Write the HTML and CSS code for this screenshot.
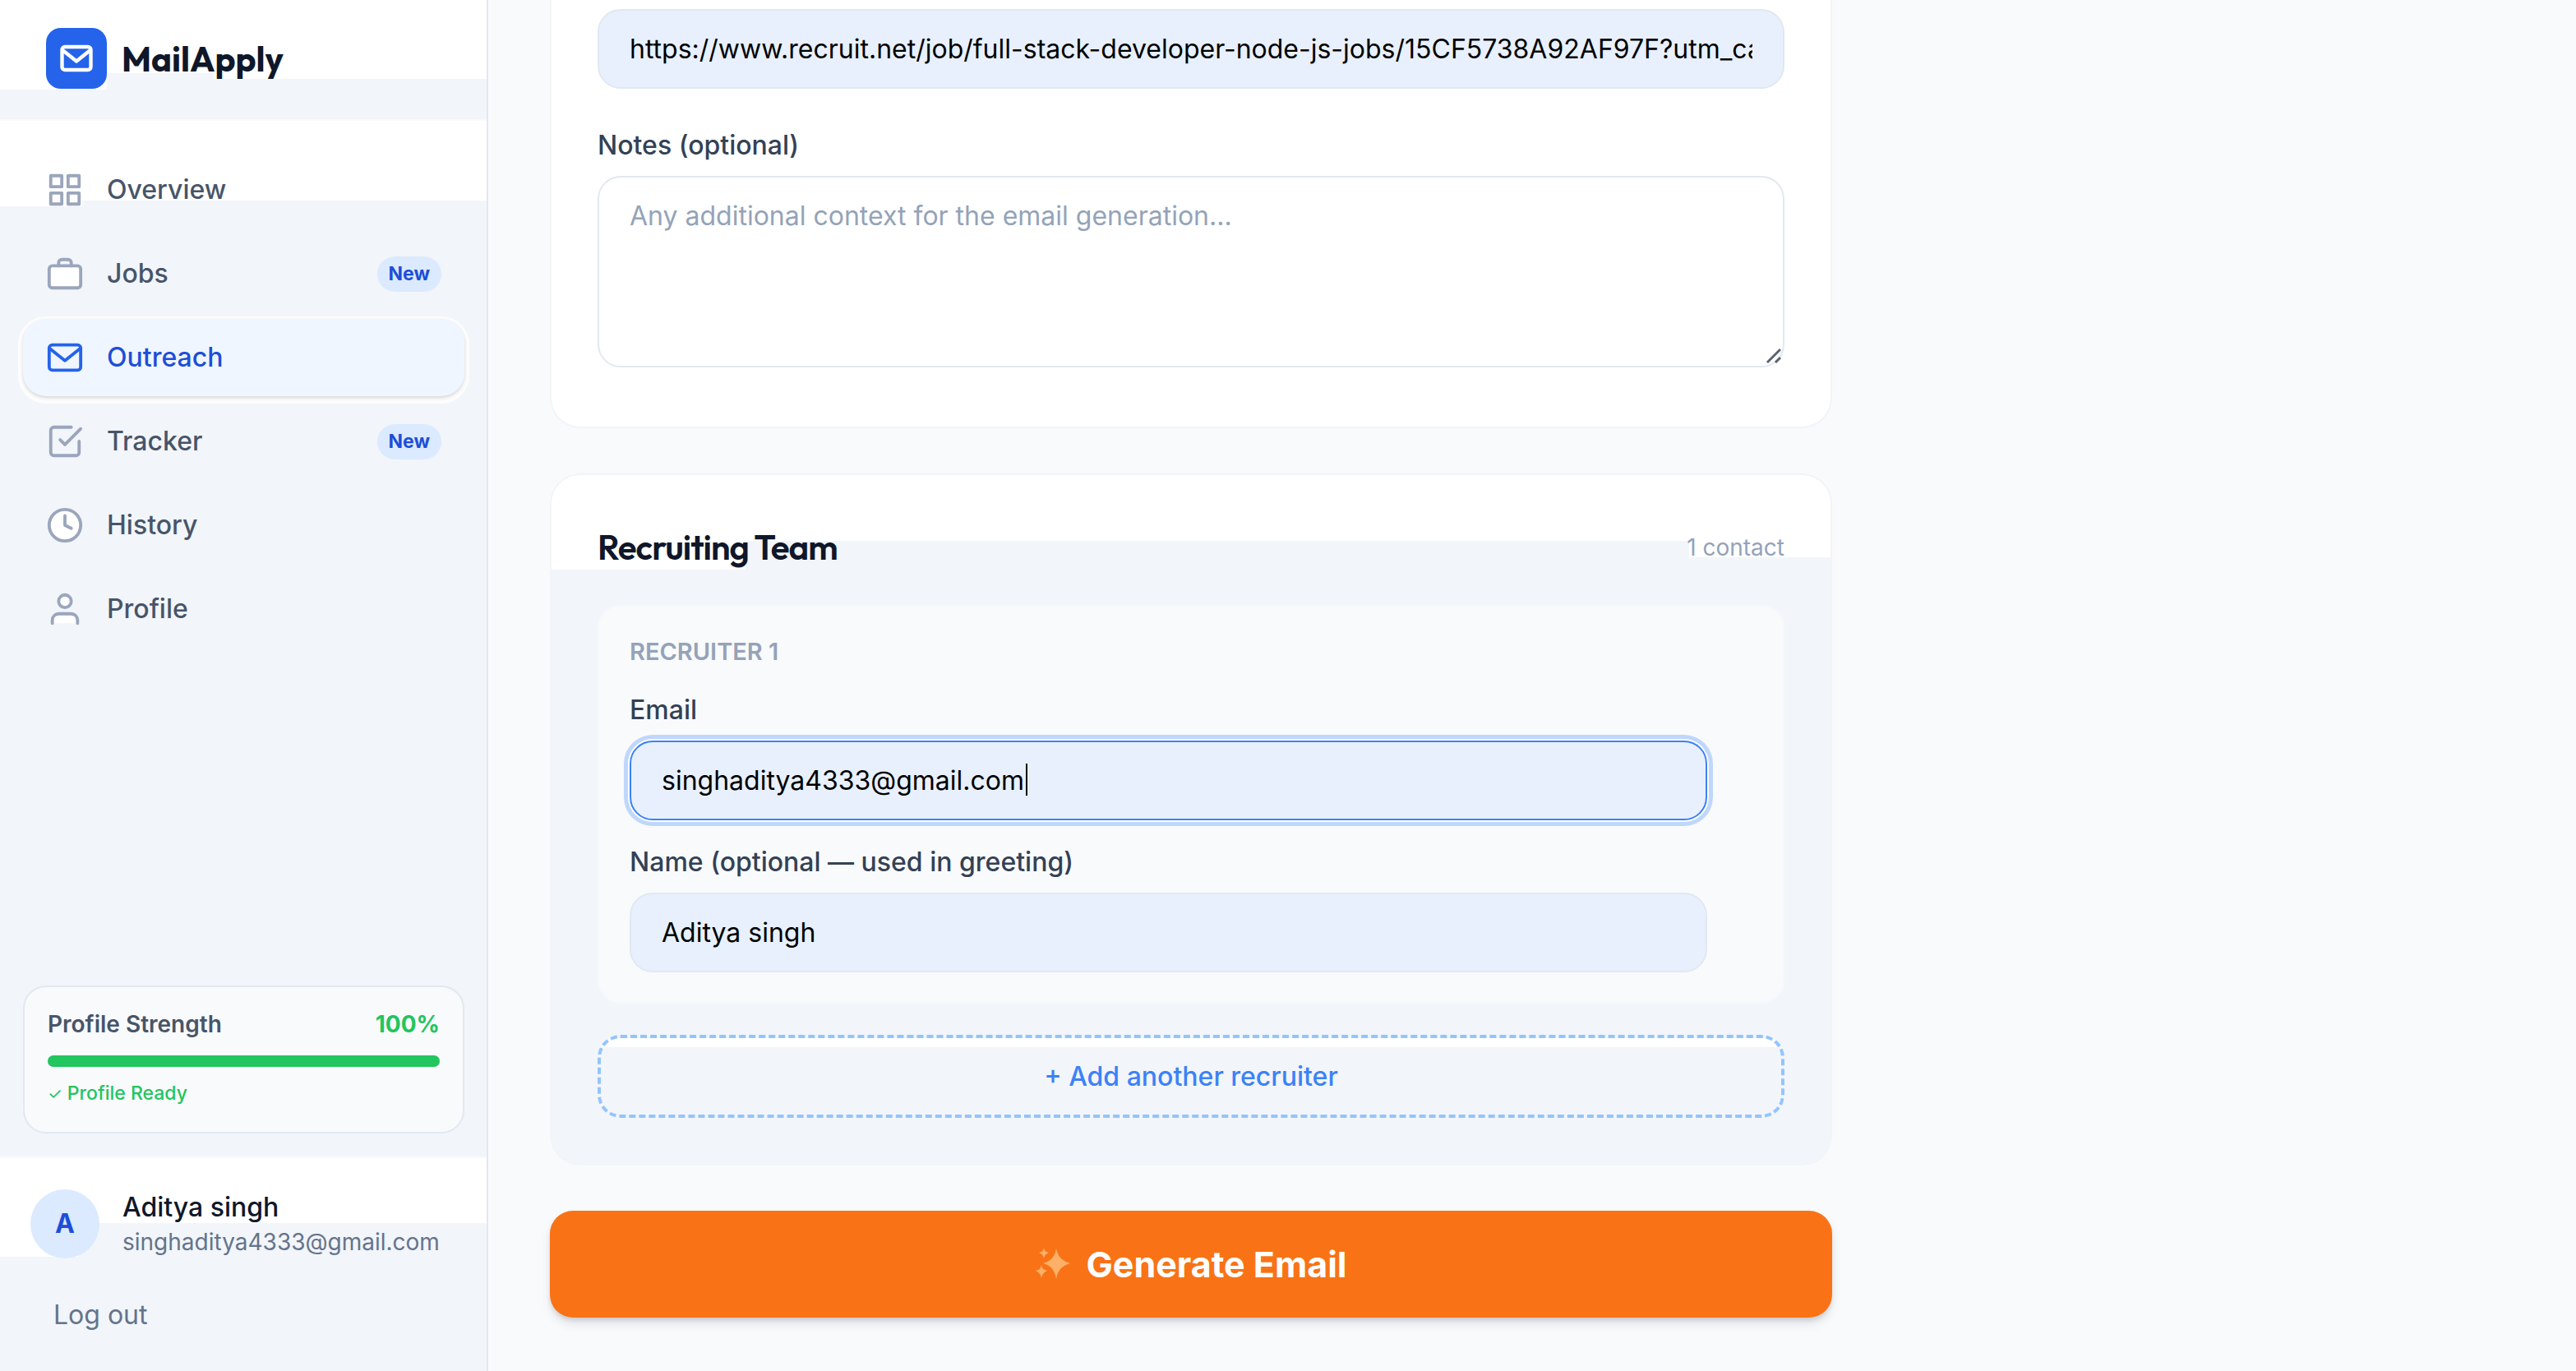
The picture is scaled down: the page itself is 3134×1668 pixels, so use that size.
FILE: index.html
```html
<!DOCTYPE html>
<html lang="en">
<head>
<meta charset="utf-8">
<meta name="viewport" content="width=device-width, initial-scale=1">
<title>MailApply – Outreach</title>
<link rel="stylesheet" href="styles.css">
</head>
<body>
<div class="app">
  <aside class="sidebar">
    <header class="brand">
      <span class="brand-mark">
        <svg class="brand-icon" viewBox="0 0 24 24" aria-hidden="true"><rect x="2" y="4" width="20" height="16" rx="2"/><path d="M22 6l-10 8L2 6"/></svg>
      </span>
      <span class="brand-name">MailApply</span>
    </header>

    <nav class="nav" aria-label="Main">
      <a class="nav-item" href="#overview">
        <svg class="icon" viewBox="0 0 24 24" aria-hidden="true"><rect x="3" y="3" width="7" height="7"/><rect x="14" y="3" width="7" height="7"/><rect x="3" y="14" width="7" height="7"/><rect x="14" y="14" width="7" height="7"/></svg>
        <span>Overview</span>
      </a>
      <a class="nav-item" href="#jobs">
        <svg class="icon filled" viewBox="0 0 24 24" aria-hidden="true"><rect x="2" y="7" width="20" height="14" rx="2"/><path class="hollow" d="M16 7V5a2 2 0 0 0-2-2h-4a2 2 0 0 0-2 2v2"/></svg>
        <span>Jobs</span>
        <span class="badge">New</span>
      </a>
      <a class="nav-item active" href="#outreach" aria-current="page">
        <svg class="icon" viewBox="0 0 24 24" aria-hidden="true"><rect x="2" y="4" width="20" height="16" rx="2"/><path d="M22 6l-10 8L2 6"/></svg>
        <span>Outreach</span>
      </a>
      <a class="nav-item" href="#tracker">
        <svg class="icon" viewBox="0 0 24 24" aria-hidden="true"><path d="M9 11l3 3L22 4"/><path d="M21 12v7a2 2 0 0 1-2 2H5a2 2 0 0 1-2-2V5a2 2 0 0 1 2-2h11"/></svg>
        <span>Tracker</span>
        <span class="badge">New</span>
      </a>
      <a class="nav-item" href="#history">
        <svg class="icon filled" viewBox="0 0 24 24" aria-hidden="true"><circle cx="12" cy="12" r="10"/><path class="hollow" d="M12 6v6l4 2"/></svg>
        <span>History</span>
      </a>
      <a class="nav-item" href="#profile">
        <svg class="icon filled" viewBox="0 0 24 24" aria-hidden="true"><path d="M20 21v-2a4 4 0 0 0-4-4H8a4 4 0 0 0-4 4v2"/><circle cx="12" cy="7" r="4"/></svg>
        <span>Profile</span>
      </a>
    </nav>

    <section class="strength">
      <div class="strength-row">
        <span>Profile Strength</span>
        <strong>100%</strong>
      </div>
      <div class="bar"><div class="bar-fill" style="width:100%"></div></div>
      <p class="strength-note"><span class="tick">✓</span> Profile Ready</p>
    </section>

    <footer class="account">
      <div class="user">
        <span class="avatar">A</span>
        <div class="user-text">
          <span class="user-name">Aditya singh</span>
          <span class="user-mail">singhaditya4333@gmail.com</span>
        </div>
      </div>
      <button class="logout" type="button">Log out</button>
    </footer>
  </aside>

  <main class="main">
    <form class="form">
      <section class="card card-job">
        <input class="input" id="job-url" type="text" aria-label="Job URL" value="https://www.recruit.net/job/full-stack-developer-node-js-jobs/15CF5738A92AF97F?utm_campaign=google_jobs_apply">
        <label class="label label-notes" for="notes">Notes (optional)</label>
        <div class="area">
          <textarea class="input textarea" id="notes" placeholder="Any additional context for the email generation..."></textarea>
          <svg class="grip" viewBox="0 0 20 20" aria-hidden="true"><path d="M2 18L18 2M12 18l6-6"/></svg>
        </div>
      </section>

      <section class="card card-team">
        <div class="card-head">
          <h2 class="card-title">Recruiting Team</h2>
          <span class="count">1 contact</span>
        </div>
        <fieldset class="recruiter">
          <h3 class="recruiter-title">RECRUITER 1</h3>
          <label class="label" for="email">Email</label>
          <div class="focus-field">
            <input class="input focused" id="email" type="email" value="singhaditya4333@gmail.com">
            <span class="caret"></span>
          </div>
          <label class="label label-name" for="name">Name (optional — used in greeting)</label>
          <input class="input" id="name" type="text" value="Aditya singh">
        </fieldset>
        <button class="add" type="button">+ Add another recruiter</button>
      </section>

      <button class="generate" type="button">
        <svg class="sparkle" viewBox="0 0 42 40" aria-hidden="true"><path d="M25 1c2 10 7 15 17 18-10 3-15 8-17 19-2-11-6-16-16-19 10-3 14-8 16-18z"/><path d="M10 0c1 4 2 5 6 6-4 2-5 3-6 7-1-4-2-5-6-7 4-1 5-2 6-6z"/><path d="M7 21c1 5 3 6 7 7-4 2-6 4-7 9-1-5-3-7-7-9 4-1 6-2 7-7z"/></svg>
        <span>Generate Email</span>
      </button>
    </form>
  </main>
</div>
</body>
</html>
```
FILE: styles.css
```css
:root {
  --page: #f9fafc;
  --tint: #f2f5fa;
  --line: #e2e8f0;
  --muted: #94a3b8;
  --blue: #2563eb;
  --blue-dark: #1d4ed8;
  --green: #22c55e;
}

* { box-sizing: border-box; }

body {
  margin: 0;
  background: var(--page);
  color: #0f172a;
  font-family: Inter, "Liberation Sans", sans-serif;
  font-size: 32px;
  line-height: 48px;
}

input, textarea, button { font: inherit; }

.app {
  display: grid;
  grid-template-columns: 594px 1fr;
  min-height: 100vh;
}

/* Sidebar */
.sidebar {
  display: flex;
  flex-direction: column;
  background: var(--tint);
  border-right: 2px solid var(--line);
}

.brand {
  display: flex;
  align-items: center;
  gap: 18px;
  height: 147px;
  padding: 0 56px 4px;
  border-bottom: 2px solid #f8fafc;
  background:
    linear-gradient(#fff, #fff) 0 0 / 130px 109px no-repeat,
    linear-gradient(#fff, #fff) 0 0 / 260px 89px no-repeat,
    linear-gradient(#fff, #fff) 260px 0 / 100% 96px no-repeat,
    var(--tint);
}

.brand-mark {
  display: grid;
  place-items: center;
  width: 74px;
  height: 74px;
  border-radius: 18px;
  background: var(--blue);
}

.brand-icon {
  width: 42px;
  height: 42px;
  fill: none;
  stroke: #fff;
  stroke-width: 2.5;
  stroke-linejoin: round;
}

.brand-name {
  padding-top: 2px;
  font-family: Outfit, Lato, sans-serif;
  font-weight: 700;
  font-size: 42px;
}

.nav {
  display: flex;
  flex: 1;
  flex-direction: column;
  gap: 8px;
  padding: 37px 27px 0 28px;
  background:
    linear-gradient(#fff, #fff) 0 0 / 100px 104px no-repeat,
    linear-gradient(#fff, #fff) 100px 0 / 100% 97px no-repeat;
}

.nav-item {
  display: flex;
  align-items: center;
  gap: 28px;
  height: 94px;
  padding: 0 28px;
  border-radius: 28px;
  color: #475569;
  font-weight: 500;
  text-decoration: none;
}

.nav-item.active {
  background: #eff6ff;
  color: var(--blue-dark);
  box-shadow: 0 2px 4px rgba(0, 0, 0, 0.16), 0 3px 0 6px #fdfdfd;
}

.icon {
  width: 46px;
  height: 46px;
  fill: none;
  stroke: #9aa6bc;
  stroke-width: 2;
  stroke-linecap: round;
  stroke-linejoin: round;
}

.icon.filled { fill: #fff; }
.icon .hollow { fill: none; }
.active .icon { stroke: var(--blue); }

.badge {
  margin-left: auto;
  padding: 0 14px;
  border-radius: 22px;
  background: #dbeafe;
  color: var(--blue-dark);
  font-size: 23px;
  font-weight: 700;
  line-height: 43px;
}

.strength {
  height: 180px;
  margin: 0 27px 28px 28px;
  padding: 21px 28px;
  border: 2px solid var(--line);
  border-radius: 28px;
  background: var(--page);
  color: #475569;
}

.strength-row {
  display: flex;
  justify-content: space-between;
  font-size: 28px;
  font-weight: 600;
}

.strength-row strong {
  color: var(--green);
  font-weight: 700;
}

.bar {
  height: 14px;
  margin: 14px 0 8px;
  border-radius: 7px;
  background: var(--line);
}

.bar-fill {
  height: 100%;
  border-radius: 7px;
  background: var(--green);
}

.strength-note {
  margin: 0;
  color: var(--green);
  font-size: 23px;
  font-weight: 500;
}

.tick {
  font-size: 20px;
  font-weight: 400;
}

.account {
  padding: 37px 37px 44px;
  border-top: 2px solid #f8fafc;
  background:
    linear-gradient(#fff, #fff) 0 0 / 96px 120px no-repeat,
    linear-gradient(#fff, #fff) 96px 0 / 100% 79px no-repeat;
}

.user {
  display: flex;
  align-items: center;
  gap: 28px;
}

.avatar {
  width: 84px;
  border-radius: 50%;
  background: #dbeafe;
  color: var(--blue-dark);
  font-weight: 700;
  line-height: 84px;
  text-align: center;
}

.user-text {
  display: flex;
  flex-direction: column;
  padding-top: 2px;
  line-height: 42px;
}

.user-name { font-weight: 500; }

.user-mail {
  color: #64748b;
  font-size: 28px;
}

.logout {
  display: block;
  margin-top: 44px;
  padding: 0 28px;
  border: 0;
  background: none;
  color: #64748b;
}

/* Compose form */
.main { padding: 0 75px; }

.form {
  display: flex;
  flex-direction: column;
  gap: 55px;
  max-width: 1560px;
}

.card {
  border: 2px solid #f1f5f9;
  border-radius: 37px;
  background: #fff;
}

.card-job {
  padding: 11px 56px 72px;
  border-top: 0;
  border-radius: 0 0 37px 37px;
}

.input {
  display: block;
  width: 100%;
  height: 97px;
  padding: 0 37px;
  border: 2px solid var(--line);
  border-radius: 28px;
  outline: 0;
  background: #e8f0fe;
  color: #000;
}

.label {
  display: block;
  margin-bottom: 13px;
  color: #334155;
  font-weight: 500;
}

.label-notes { margin-top: 45px; }

.area { position: relative; }

.textarea {
  height: 233px;
  padding: 23px 37px;
  background: #fff;
  resize: none;
}

.textarea::placeholder {
  color: var(--muted);
  opacity: 1;
}

.grip {
  position: absolute;
  right: 3px;
  bottom: 4px;
  width: 20px;
  height: 20px;
  fill: none;
  stroke: #5b6472;
  stroke-width: 3;
}

.card-team {
  padding: 56px;
  background:
    linear-gradient(#fff, #fff) 0 0 / 236px 115px no-repeat,
    linear-gradient(#fff, #fff) 0 0 / 100% 80px no-repeat,
    linear-gradient(#fff, #fff) 100% 0 / 172px 100px no-repeat,
    var(--tint);
}

.card-head {
  display: flex;
  align-items: center;
  justify-content: space-between;
  margin-bottom: 38px;
  line-height: 64px;
}

.card-title {
  margin: 0;
  font-family: Outfit, Lato, sans-serif;
  font-size: 42px;
  font-weight: 600;
  letter-spacing: -1px;
}

.count {
  color: var(--muted);
  font-size: 28px;
}

.recruiter {
  margin: 0 0 38px;
  padding: 31px 92px 36px 37px;
  border: 2px solid #f6f8fb;
  border-radius: 28px;
  background: var(--page);
}

.recruiter-title {
  margin: 0 0 23px;
  color: var(--muted);
  font-size: 29px;
  font-weight: 600;
}

.focus-field { position: relative; }

.focused {
  border-color: #3b82f6;
  box-shadow: 0 0 0 2px #fff, 0 0 0 7px #bfd7fc;
}

.caret {
  position: absolute;
  top: 28px;
  left: 482px;
  width: 2px;
  height: 39px;
  background: #000;
}

.label-name { margin-top: 27px; }

.add {
  display: block;
  width: 100%;
  height: 101px;
  border: 4px dashed #93c5fd;
  border-radius: 28px;
  background: linear-gradient(#fff, #fff) 0 0 / 100% 11px no-repeat;
  color: #3b82f6;
  font-weight: 500;
}

.generate {
  display: flex;
  align-items: center;
  justify-content: center;
  gap: 20px;
  height: 130px;
  border: 0;
  border-radius: 28px;
  background: #f97316;
  box-shadow: 0 8px 14px -2px rgba(15, 23, 42, 0.12), 0 4px 6px -2px rgba(15, 23, 42, 0.16);
  color: #fff;
  font-size: 43px;
  font-weight: 700;
}

.sparkle {
  width: 42px;
  height: 40px;
  fill: #fcb068;
}
```
